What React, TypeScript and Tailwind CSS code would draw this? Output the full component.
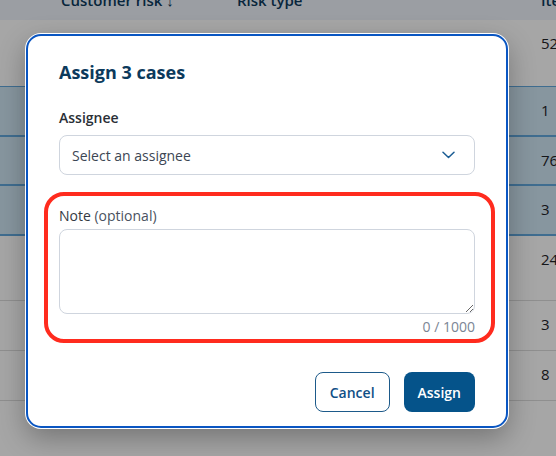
import React from "react";

const rows = [
	{ h: "h-[67px]", items: "52", selected: false, line: "border-[#62a8de]" },
	{ h: "h-[50px]", items: "1", selected: true, line: "border-[#62a8de]" },
	{ h: "h-[49px]", items: "76", selected: true, line: "border-[#62a8de]" },
	{ h: "h-[50px]", items: "3", selected: true, line: "border-[#62a8de]" },
	{ h: "h-[65px]", items: "24", selected: false, line: "border-[#dcdcdc]" },
	{ h: "h-[50px]", items: "3", selected: false, line: "border-[#dcdcdc]" },
	{ h: "h-[50px]", items: "8", selected: false, line: "border-[#dcdcdc]" },
];

const ChevronDown = () => (
	<svg width="13" height="8" viewBox="0 0 13 8" fill="none">
		<path d="M1 1.2l5.5 5.3L12 1.2" stroke="#1b5d94" strokeWidth="1.5" strokeLinecap="round" strokeLinejoin="round" />
	</svg>
);

const App = () => {
	return (
		<div className="relative h-[456px] w-[556px] overflow-hidden bg-white font-['Open_Sans',sans-serif]">
			{/* table behind the dialog */}
			<div className="flex flex-col">
				<div className="-mt-5 grid h-10 grid-cols-[61px_176px_304px_1fr] items-center bg-[#eef3fb] text-[15px] font-semibold text-[#0c3a5c]">
					<div />
					<div>Customer risk ↓</div>
					<div>Risk type</div>
					<div>Items</div>
				</div>
				{rows.map((r, i) => (
					<div
						key={i}
						className={`grid grid-cols-[541px_1fr] items-start pt-[13px] text-[15px] leading-5 text-[#1f2328] ${r.h} ${
							r.selected ? "border-b-2 bg-[#d0e6f5]" : "border-b"
						} ${r.line}`}
					>
						<div />
						<div>{r.items}</div>
					</div>
				))}
			</div>

			<div className="absolute inset-0 bg-black/35" />

			{/* dialog */}
			<div className="absolute left-[26px] top-[34px] flex h-[394px] w-[482px] flex-col rounded-[15px] border-2 border-[#0a56c2] bg-white px-[31px] pt-[22px] shadow-[0_0_0_1px_#ffffff,0_10px_28px_rgba(0,0,0,0.3)]">
				<h2 className="text-[18px] font-bold leading-7 text-[#0c3a5c]">Assign 3 cases</h2>

				<label className="mt-[22px] mb-[7px] text-[14px] font-semibold leading-5 text-[#2a2f36]">Assignee</label>
				<button className="flex h-10 items-center justify-between rounded-lg border border-[#cfd5de] pl-[12px] pr-[19px] text-left text-[14px] text-[#3c4654]">
					<span>Select an assignee</span>
					<ChevronDown />
				</button>

				<div className="relative mt-[31px] flex flex-col">
					<div className="pointer-events-none absolute -left-[15px] -right-[20px] -top-[14px] -bottom-[6px] rounded-[20px] border-4 border-[#ff2b1e]" />
					<label className="mb-[3px] text-[14px] leading-5 text-[#343a42]">
						Note <span className="text-[#4a5260]">(optional)</span>
					</label>
					<textarea className="h-[85px] resize-y rounded-lg border border-[#cfd5de] bg-white px-3 py-2 text-[14px] outline-none" />
					<div className="mt-[3px] text-right text-[14px] leading-5 text-[#7b8594]">0 / 1000</div>
				</div>

				<div className="mt-[35px] flex justify-end gap-[14px]">
					<button className="h-10 rounded-lg border border-[#1d5a8a] px-[14px] text-[14px] font-semibold text-[#0f4f86]">
						Cancel
					</button>
					<button className="h-10 rounded-lg bg-[#05538a] px-[14px] text-[14px] font-semibold text-white">Assign</button>
				</div>
			</div>
		</div>
	);
};

export default App;
